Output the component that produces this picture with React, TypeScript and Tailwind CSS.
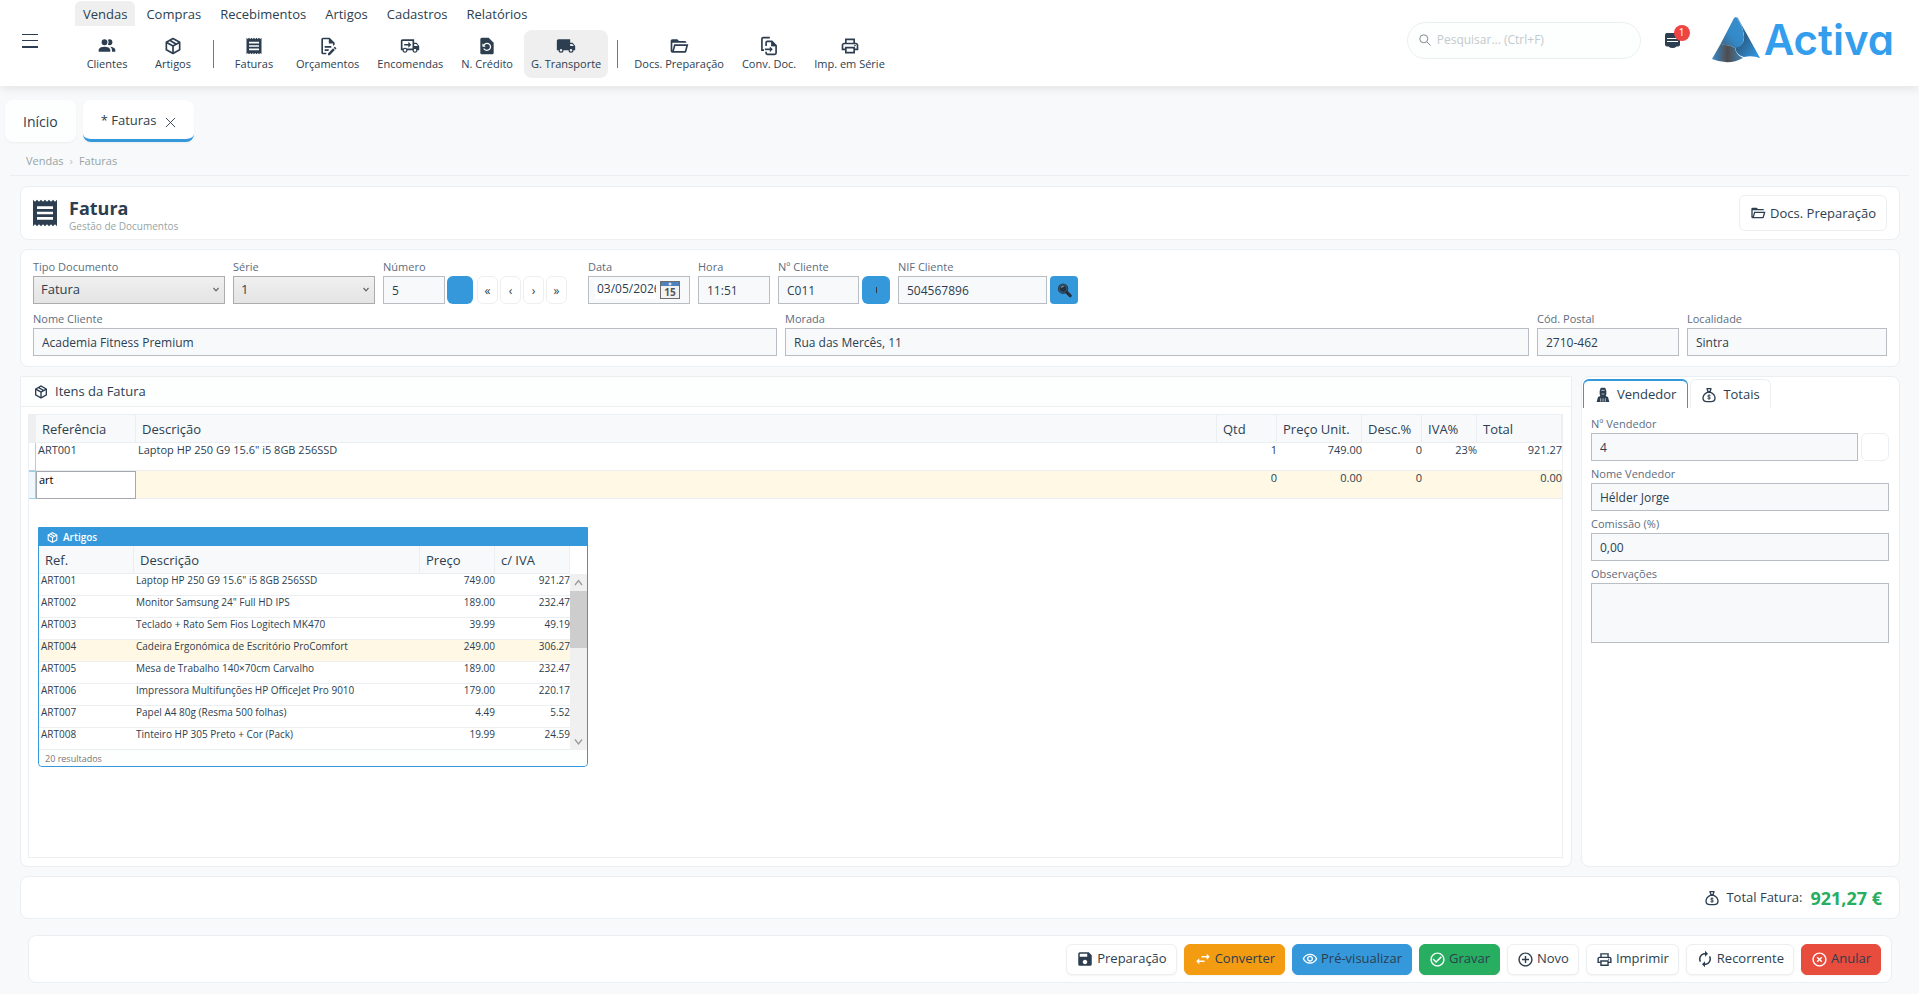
import React from 'react';
import {
  MdOutlinePrint,
  MdRestorePage,
  MdSave,
  MdSwapHoriz,
  MdOutlineVisibility,
  MdCheckCircleOutline,
  MdAddCircleOutline,
  MdAutorenew,
  MdHighlightOff,
} from 'react-icons/md';

type IconProps = { className?: string };

function Glyph({ d, className }: { d: string; className?: string }) {
  return (
    <svg viewBox="0 0 24 24" fill="currentColor" fillRule="evenodd" className={className} aria-hidden="true">
      <path d={d} />
    </svg>
  );
}

const PEOPLE =
  'M16 17V19H2V17S2 13 9 13 16 17 16 17M12.5 7.5A3.5 3.5 0 1 0 9 11A3.5 3.5 0 0 0 12.5 7.5M15.94 13A5.32 5.32 0 0 1 18 17V19H22V17S22 13.37 15.94 13M15 4A3.39 3.39 0 0 0 13.07 4.59A5 5 0 0 1 13.07 10.41A3.39 3.39 0 0 0 15 11A3.5 3.5 0 0 0 15 4Z';
const BOX =
  'M21,16.5C21,16.88 20.79,17.21 20.47,17.38L12.57,21.82C12.41,21.94 12.21,22 12,22C11.79,22 11.59,21.94 11.43,21.82L3.53,17.38C3.21,17.21 3,16.88 3,16.5V7.5C3,7.12 3.21,6.79 3.53,6.62L11.43,2.18C11.59,2.06 11.79,2 12,2C12.21,2 12.41,2.06 12.57,2.18L20.47,6.62C20.79,6.79 21,7.12 21,7.5V16.5M12,4.15L10.11,5.22L16,8.61L17.96,7.5L12,4.15M6.04,7.5L12,10.85L13.96,9.75L8.08,6.35L6.04,7.5M5,15.91L11,19.29V12.58L5,9.21V15.91M19,15.91V9.21L13,12.58V19.29L19,15.91Z';
const RECEIPT =
  'M3,22L4.5,20.5L6,22L7.5,20.5L9,22L10.5,20.5L12,22L13.5,20.5L15,22L16.5,20.5L18,22L19.5,20.5L21,22V2L19.5,3.5L18,2L16.5,3.5L15,2L13.5,3.5L12,2L10.5,3.5L9,2L7.5,3.5L6,2L4.5,3.5L3,2M18,9H6V7H18M18,13H6V11H18M18,17H6V15H18V17Z';
const DOC_EDIT =
  'M8,12H16V14H8V12M10,20H6V4H13V9H18V12.1L20,10.1V8L14,2H6A2,2 0 0,0 4,4V20A2,2 0 0,0 6,22H10V20M8,18H12.1L13,17.1V16H8V18M20.2,13C20.3,13 20.5,13.1 20.6,13.2L21.9,14.5C22.1,14.7 22.1,15.1 21.9,15.3L20.9,16.3L18.8,14.2L19.8,13.2C19.9,13.1 20,13 20.2,13M20.2,16.9L14.1,23H12V20.9L18.1,14.8L20.2,16.9Z';
const TRUCK_ARROW =
  'M18 18.5C18.83 18.5 19.5 17.83 19.5 17C19.5 16.17 18.83 15.5 18 15.5C17.17 15.5 16.5 16.17 16.5 17C16.5 17.83 17.17 18.5 18 18.5M19.5 9.5H17V12H21.46L19.5 9.5M6 18.5C6.83 18.5 7.5 17.83 7.5 17C7.5 16.17 6.83 15.5 6 15.5C5.17 15.5 4.5 16.17 4.5 17C4.5 17.83 5.17 18.5 6 18.5M20 8L23 12V17H21C21 18.66 19.66 20 18 20C16.34 20 15 18.66 15 17H9C9 18.66 7.66 20 6 20C4.34 20 3 18.66 3 17H1V6C1 4.89 1.89 4 3 4H17V8H20M3 6V15H3.76C4.31 14.39 5.11 14 6 14C6.89 14 7.69 14.39 8.24 15H15V6H3M10 7L13.5 10.5L10 14V11.5H5V9.5H10V7Z';
const TRUCK =
  'M18,18.5A1.5,1.5 0 0,1 16.5,17A1.5,1.5 0 0,1 18,15.5A1.5,1.5 0 0,1 19.5,17A1.5,1.5 0 0,1 18,18.5M19.5,9.5L21.46,12H17V9.5M6,18.5A1.5,1.5 0 0,1 4.5,17A1.5,1.5 0 0,1 6,15.5A1.5,1.5 0 0,1 7.5,17A1.5,1.5 0 0,1 6,18.5M20,8H17V4H3C1.89,4 1,4.89 1,6V17H3A3,3 0 0,0 6,20A3,3 0 0,0 9,17H15A3,3 0 0,0 18,20A3,3 0 0,0 21,17H23V12L20,8Z';
const FOLDER =
  'M6.1,10L4,18V8H21A2,2 0 0,0 19,6H12L10,4H4A2,2 0 0,0 2,6V18A2,2 0 0,0 4,20H19C19.9,20 20.7,19.4 20.9,18.5L23.2,10H6.1M19,18H6L7.6,12H20.6L19,18Z';

function DocSwap({ className }: IconProps) {
  return (
    <svg viewBox="0 0 24 24" fill="none" stroke="currentColor" strokeWidth="2" className={className} aria-hidden="true">
      <path d="M13 2H5a1.500 1.500 0 0 0-1.500 1.500V17H6" />
      <path d="M8.500 12V8a1.500 1.500 0 0 1 1.500-1.500h5.500L20.500 11.500V20.500a1.500 1.500 0 0 1-1.500 1.500H10a1.500 1.500 0 0 1-1.500-1.500V19" />
      <path d="M15 6.500V12h5.500z" fill="currentColor" strokeWidth="1" />
      <path d="M7 16h7" />
      <path d="M13 12.500L16.500 16 13 19.500z" fill="currentColor" stroke="none" />
    </svg>
  );
}

function MoneyBag({ className }: IconProps) {
  return (
    <svg viewBox="0 0 24 24" fill="none" stroke="currentColor" strokeWidth="2" className={className} aria-hidden="true">
      <path d="M9 2.500h6l-1.500 4.500h-3z" strokeLinejoin="round" />
      <path d="M9.500 8C5.500 10 3 13 3 16.500 3 20 5.500 22 9 22h6c3.500 0 6-2 6-5.500 0-3.500-2.500-6.500-6.500-8.500z" />
      <path d="M14.300 13.200c-.6-.7-1.300-.9-2.300-.9-1.300 0-2.100.6-2.100 1.400 0 2 4.300.8 4.300 2.800 0 .9-.9 1.400-2.200 1.400-1 0-1.900-.3-2.400-1M12 11.200v7.800" strokeWidth="1.300" />
    </svg>
  );
}

function Seller({ className }: IconProps) {
  return (
    <svg viewBox="0 0 24 24" className={className} aria-hidden="true">
      <path fill="currentColor" d="M8 3Q8 1 10 1h4q2 0 2 2l1 3v5l-1 2.500 3.500 1.500 2 7.500H2.500l2-7.500L8 13.500 7 11V6z" />
      <path stroke="#fff" strokeWidth="1" fill="none" d="M9.500 5h5M8.500 17v5M15.500 17v5M12 17v5M10 10.500h4" />
    </svg>
  );
}

function Calendar({ className }: IconProps) {
  return (
    <svg viewBox="0 0 20 18" className={className} aria-hidden="true">
      <rect x="0.500" y="0.500" width="19" height="17" fill="#f2f2f2" stroke="#6d6d6d" />
      <rect x="1" y="1" width="18" height="4" fill="#4f81bd" />
      <path d="M10 1.500v3M8.500 3h3" stroke="#fff" />
      <text x="10" y="15" textAnchor="middle" fontSize="10" fontWeight="700" fontFamily="Open Sans, sans-serif" fill="#555">15</text>
    </svg>
  );
}

function Logo() {
  return (
    <svg viewBox="0 0 48 46" className="h-[46px] w-12" aria-hidden="true">
      <defs>
        <linearGradient id="lg1" x1="1" y1="0" x2="0.100" y2="1">
          <stop offset="0" stopColor="#3b8fcc" />
          <stop offset="0.600" stopColor="#3389c8" />
          <stop offset="1" stopColor="#3f6483" />
        </linearGradient>
        <linearGradient id="lg2" x1="0" y1="0" x2="0.800" y2="1">
          <stop offset="0" stopColor="#3586bf" />
          <stop offset="0.500" stopColor="#2b618c" />
          <stop offset="1" stopColor="#3295dc" />
        </linearGradient>
        <linearGradient id="lg3" x1="0" y1="0" x2="1" y2="0">
          <stop offset="0" stopColor="#3a8ccb" />
          <stop offset="0.500" stopColor="#504c4e" />
          <stop offset="1" stopColor="#3a84bb" />
        </linearGradient>
      </defs>
      <path d="M24 0Q26 0 27 3L48 41Q40 38 32 40 24 38 23 30 33 29 32 18 30 6 24 0z" fill="url(#lg2)" />
      <path d="M24 0Q22 0 21 3L8 28Q16 27 23 31 32 30 32 20 31 8 24 0z" fill="url(#lg1)" />
      <path d="M8 28Q16 27 23 31 24 38 31 41 17 49 0 42z" fill="url(#lg3)" />
    </svg>
  );
}

const menus = ['Vendas', 'Compras', 'Recebimentos', 'Artigos', 'Cadastros', 'Relatórios'];

function Tool({ icon, label, active }: { icon: React.ReactNode; label: string; active?: boolean }) {
  return (
    <button
      type="button"
      className={`flex h-12 min-w-[62px] flex-col items-center rounded-lg px-[7px] pt-1.5 text-[11px] leading-4 ${active ? 'bg-[#efefef]' : ''}`}
    >
      {icon}
      <span>{label}</span>
    </button>
  );
}

function Divider() {
  return <span className="mx-[5px] h-7 w-px bg-[#777]" />;
}

function Field({ label, id, value, className }: { label: string; id: string; value: string; className?: string }) {
  return (
    <div className={`flex flex-col gap-px ${className ?? ''}`}>
      <label htmlFor={id} className="text-[11px] leading-4 text-[#5d6d7e]">{label}</label>
      <input id={id} defaultValue={value} className="h-7 w-full min-w-0 border border-[#b8bec3] bg-[#f8f9fb] px-2 text-xs" />
    </div>
  );
}

function Pick({ label, id, value, className }: { label: string; id: string; value: string; className?: string }) {
  return (
    <div className={`flex flex-col gap-px ${className ?? ''}`}>
      <label htmlFor={id} className="text-[11px] leading-4 text-[#5d6d7e]">{label}</label>
      <div className="relative">
        <select id={id} className="h-7 w-full appearance-none border border-[#acacac] bg-linear-to-b from-[#f0f0f0] to-[#e4e4e4] px-[7px] text-[13px]">
          <option>{value}</option>
        </select>
        <svg viewBox="0 0 8 6" className="pointer-events-none absolute top-[11px] right-[5px] h-1.5 w-2" fill="none" stroke="#666" strokeWidth="1.200" aria-hidden="true">
          <path d="M1.500 1L4 3.800 6.500 1" />
        </svg>
      </div>
    </div>
  );
}

function Action({ icon, label, tone }: { icon: React.ReactNode; label: string; tone?: string }) {
  return (
    <button
      type="button"
      className={`flex h-[31px] items-center gap-[3px] rounded-md border px-[9px] text-[13px] shadow-xs ${tone ?? 'border-[#eceff1] bg-white'}`}
    >
      {icon}
      <span className="text-[#2c3e50]">{label}</span>
    </button>
  );
}

const articles = [
  ['ART001', 'Laptop HP 250 G9 15.6" i5 8GB 256SSD', '749.00', '921.27'],
  ['ART002', 'Monitor Samsung 24" Full HD IPS', '189.00', '232.47'],
  ['ART003', 'Teclado + Rato Sem Fios Logitech MK470', '39.99', '49.19'],
  ['ART004', 'Cadeira Ergonómica de Escritório ProComfort', '249.00', '306.27'],
  ['ART005', 'Mesa de Trabalho 140×70cm Carvalho', '189.00', '232.47'],
  ['ART006', 'Impressora Multifunções HP OfficeJet Pro 9010', '179.00', '220.17'],
  ['ART007', 'Papel A4 80g (Resma 500 folhas)', '4.49', '5.52'],
  ['ART008', 'Tinteiro HP 305 Preto + Cor (Pack)', '19.99', '24.59'],
];

function ArticlePopup() {
  return (
    <div className="absolute top-[112px] left-[9px] w-[550px] rounded-b border border-[#3498db] bg-white">
      <div className="flex h-[18px] items-center gap-1 bg-[#3498db] px-[7px] pt-px text-[10px] font-semibold text-white">
        <Glyph d={BOX} className="size-[13px]" />
        Artigos
      </div>
      <div className="flex">
        <table className="flex-1 table-fixed border-separate border-spacing-0 text-left">
          <colgroup>
            <col className="w-[95px]" />
            <col />
            <col className="w-[75px]" />
            <col className="w-[75px]" />
          </colgroup>
          <thead>
            <tr className="h-7 bg-[#f8f9fb] text-[13px]">
              {['Ref.', 'Descrição', 'Preço', 'c/ IVA'].map((h) => (
                <th key={h} className="border-r border-b border-[#eceff1] px-1.5 pt-0.5 pb-0 font-normal">{h}</th>
              ))}
            </tr>
          </thead>
          <tbody className="text-[10px] leading-3">
            {articles.map((r) => (
              <tr key={r[0]} className={`h-[22px] align-top ${r[0] === 'ART004' ? 'bg-[#fff8e5]' : ''}`}>
                <td className="border-b border-[#eceff1] px-0.5 py-0">{r[0]}</td>
                <td className="border-b border-[#eceff1] px-0.5 py-0">{r[1]}</td>
                <td className="border-b border-[#eceff1] py-0 text-right">{r[2]}</td>
                <td className="border-b border-[#eceff1] py-0 text-right">{r[3]}</td>
              </tr>
            ))}
          </tbody>
        </table>
        <div className="mt-7 flex w-[17px] flex-col items-center bg-[#f0f0f0]">
          <svg viewBox="0 0 17 17" className="size-[17px]" fill="none" stroke="#999" strokeWidth="1.300" aria-hidden="true"><path d="M5 11L8.500 6.500 12 11" /></svg>
          <div className="h-[57px] w-full bg-[#cdcdcd]" />
          <svg viewBox="0 0 17 17" className="mt-auto size-[17px]" fill="none" stroke="#999" strokeWidth="1.300" aria-hidden="true"><path d="M5 6.500L8.500 11 12 6.500" /></svg>
        </div>
      </div>
      <div className="flex h-4 items-center rounded-b bg-[#fdfefe] px-1.5 pt-0.5 text-[9px] text-[#777]">20 resultados</div>
    </div>
  );
}

export default function App() {
  return (
    <div className="flex min-h-screen flex-col bg-[#f8f9fb] font-['Open_Sans','Noto_Sans',sans-serif] text-[13px] text-[#2c3e50]">
      <header className="flex h-[86px] items-center bg-white pr-[25px] shadow-[0_2px_10px_rgba(0,0,0,0.1)]">
        <button type="button" aria-label="Menu" className="mb-1 ml-[22px] flex w-4 flex-col gap-[5px]">
          <span className="h-px w-full bg-[#2c3e50]" />
          <span className="h-px w-full bg-[#2c3e50]" />
          <span className="h-0.5 w-full bg-[#2c3e50]" />
        </button>
        <div className="ml-[37px] flex h-full flex-col pt-px">
          <nav className="flex h-[25px] gap-[3px]">
            {menus.map((m, i) => (
              <a key={m} href="#" className={`flex items-center rounded-t-md px-2 pt-0.5 ${i === 0 ? 'bg-[#efefef]' : ''}`}>{m}</a>
            ))}
          </nav>
          <div className="mt-1 ml-px flex items-center gap-1">
            <Tool icon={<Glyph d={PEOPLE} className="size-5" />} label="Clientes" />
            <Tool icon={<Glyph d={BOX} className="size-5" />} label="Artigos" />
            <Divider />
            <Tool icon={<Glyph d={RECEIPT} className="size-5" />} label="Faturas" />
            <Tool icon={<Glyph d={DOC_EDIT} className="size-5" />} label="Orçamentos" />
            <Tool icon={<Glyph d={TRUCK_ARROW} className="size-5" />} label="Encomendas" />
            <Tool icon={<MdRestorePage className="size-5" />} label="N. Crédito" />
            <Tool icon={<Glyph d={TRUCK} className="size-5" />} label="G. Transporte" active />
            <Divider />
            <Tool icon={<Glyph d={FOLDER} className="size-5" />} label="Docs. Preparação" />
            <Tool icon={<DocSwap className="size-5" />} label="Conv. Doc." />
            <Tool icon={<MdOutlinePrint className="size-5" />} label="Imp. em Série" />
          </div>
        </div>
        <div className="mb-1.5 ml-auto flex items-center">
          <label className="flex h-[37px] w-[234px] items-center gap-1.5 rounded-full border border-[#eceff1] bg-[#fdfefe] px-[11px]">
            <svg viewBox="0 0 12 12" className="size-3" fill="none" stroke="#7f8c8d" aria-hidden="true"><circle cx="4.800" cy="4.800" r="4" /><path d="M7.800 7.800L11.500 11.500" /></svg>
            <input aria-label="Pesquisar" placeholder="Pesquisar... (Ctrl+F)" className="min-w-0 flex-1 bg-transparent text-xs outline-none placeholder:text-[#c3cacd]" />
          </label>
          <button type="button" aria-label="Notificações" className="relative ml-6 size-[15px]">
            <svg viewBox="0 0 15 15" className="size-[15px]" aria-hidden="true">
              <path fill="#2c3e50" d="M2 0h11a2 2 0 0 1 2 2v9.500a2 2 0 0 1-2 2h-1.500Q10 15 7.500 15T3.500 13.500H2a2 2 0 0 1-2-2V2a2 2 0 0 1 2-2z" />
              <path stroke="#fff" d="M2 5.500h11M2 8.500h11" />
            </svg>
            <span className="absolute -top-2 left-[9px] flex size-4 items-center justify-center rounded-full bg-[#ef4444] text-[10px] text-white">1</span>
          </button>
          <div className="ml-8 flex items-center gap-1">
            <Logo />
            <span className="font-[Inter,sans-serif] text-[42px] leading-[46px] font-semibold text-[#349eed] [font-feature-settings:'cv11']">Activa</span>
          </div>
        </div>
      </header>

      <div className="flex gap-[7px] px-[5px] pt-[14px]">
        <button type="button" className="flex h-[42px] items-center rounded-lg bg-[#fdfefe] px-[18px] pt-0.5 text-sm shadow-xs">Início</button>
        <button type="button" className="flex h-[42px] items-center gap-2 rounded-lg border-b-3 border-[#3498db] bg-white pt-0.5 pr-[18px] pl-[18px] shadow-xs">
          * Faturas
          <svg viewBox="0 0 12 12" className="mt-1 size-[11px]" fill="none" stroke="#2c3e50" aria-hidden="true"><path d="M1 1l10 10M11 1L1 11" /></svg>
        </button>
      </div>
      <div className="mx-[10px] flex h-[34px] items-center gap-1.5 border-b border-[#eceff1] px-4 pt-1.5 text-[11px] text-[#95a5a6]">
        <a href="#">Vendas</a>
        <span className="text-[#bdc3c7]">›</span>
        <a href="#">Faturas</a>
      </div>

      <main className="flex flex-1 flex-col gap-[9px] pt-[10px] pr-[19px] pb-[11px] pl-5">
        <section className="flex h-[54px] items-center rounded-lg border border-[#eceff1] bg-white px-3">
          <Glyph d={RECEIPT} className="-ml-1 size-8" />
          <div className="ml-2 flex flex-col pt-px">
            <h1 className="text-lg leading-6 font-bold">Fatura</h1>
            <span className="text-[10px] leading-3 text-[#95a5a6]">Gestão de Documentos</span>
          </div>
          <button type="button" className="ml-auto flex h-9 items-center gap-1 rounded-md border border-[#eceff1] bg-white px-[10px]">
            <Glyph d={FOLDER} className="size-4" />
            <span className="pt-px">Docs. Preparação</span>
          </button>
        </section>

        <section className="flex flex-col gap-[7px] rounded-lg border border-[#eceff1] bg-white px-3 pt-[9px] pb-[10px]">
          <div className="flex items-end gap-2">
            <Pick label="Tipo Documento" id="tipo" value="Fatura" className="w-48" />
            <Pick label="Série" id="serie" value="1" className="w-[142px]" />
            <div className="flex items-end gap-0.5">
              <Field label="Número" id="numero" value="5" className="w-[62px]" />
              <button type="button" aria-label="Procurar documento" className="mr-0.5 h-7 w-[26px] rounded-md bg-[#3498db]" />
              {['«', '‹', '›', '»'].map((s) => (
                <button key={s} type="button" className="h-7 w-[21px] rounded-md border border-[#eceff1] bg-white pt-0.5 text-xs">{s}</button>
              ))}
            </div>
            <div className="ml-[13px] flex w-[102px] flex-col gap-px">
              <label htmlFor="data" className="text-[11px] leading-4 text-[#5d6d7e]">Data</label>
              <div className="flex h-7 items-center gap-1 border border-[#b8bec3] bg-[#f8f9fb] pr-[9px] pl-1.5">
                <input id="data" defaultValue="03/05/2026" className="h-[18px] min-w-0 flex-1 bg-white pb-1 pl-0.5 text-xs" />
                <button type="button" aria-label="Calendário"><Calendar className="h-[18px] w-5" /></button>
              </div>
            </div>
            <Field label="Hora" id="hora" value="11:51" className="w-[72px]" />
            <div className="flex items-end gap-[3px]">
              <Field label="Nº Cliente" id="ncliente" value="C011" className="w-[81px]" />
              <button type="button" aria-label="Procurar cliente" className="flex h-7 w-7 items-center justify-center rounded-md bg-[#3498db]">
                <span className="h-1.5 w-px bg-[#2c3e50]" />
              </button>
            </div>
            <div className="flex items-end gap-[3px]">
              <Field label="NIF Cliente" id="nif" value="504567896" className="w-[149px]" />
              <button type="button" aria-label="Procurar NIF" className="flex h-7 w-7 items-center justify-center rounded-sm bg-[#3498db]">
                <svg viewBox="0 0 16 16" className="size-[15px]" aria-hidden="true">
                  <circle cx="6.500" cy="6" r="4.800" fill="#24313f" stroke="#2c3e50" strokeWidth="1.600" />
                  <circle cx="6.500" cy="6" r="4" fill="none" stroke="#3c7aa8" strokeWidth="0.600" />
                  <path d="M4.500 4.500L7 3.500" stroke="#9cc7e6" />
                  <path d="M10.500 10L14 13.500" stroke="#24313f" strokeWidth="3.400" strokeLinecap="round" />
                </svg>
              </button>
            </div>
          </div>
          <div className="flex gap-2">
            <Field label="Nome Cliente" id="nome" value="Academia Fitness Premium" className="flex-1" />
            <Field label="Morada" id="morada" value="Rua das Mercês, 11" className="flex-1" />
            <Field label="Cód. Postal" id="cp" value="2710-462" className="w-[142px]" />
            <Field label="Localidade" id="local" value="Sintra" className="w-[200px]" />
          </div>
        </section>

        <div className="flex flex-1 gap-[9px]">
          <section className="flex flex-1 flex-col rounded-b-lg border border-[#eceff1] bg-white">
            <h2 className="flex h-[30px] items-center gap-1.5 border-b border-[#eceff1] bg-[#fdfefe] px-3 pt-px">
              <Glyph d={BOX} className="size-4" />
              Itens da Fatura
            </h2>
            <div className="relative mr-2 mb-2 ml-[7px] mt-[7px] flex-1 border border-[#eceff1]">
              <table className="w-full table-fixed border-separate border-spacing-0 text-left">
                <colgroup>
                  <col className="w-[7px]" />
                  <col className="w-[100px]" />
                  <col />
                  <col className="w-[60px]" />
                  <col className="w-[85px]" />
                  <col className="w-[60px]" />
                  <col className="w-[55px]" />
                  <col className="w-[85px]" />
                </colgroup>
                <thead>
                  <tr className="h-7 bg-[#f8f9fb]">
                    <td className="bg-[#efefef] p-0" />
                    {['Referência', 'Descrição', 'Qtd', 'Preço Unit.', 'Desc.%', 'IVA%', 'Total'].map((h) => (
                      <th key={h} className="border-r border-b border-[#eceff1] px-1.5 pt-0.5 pb-0 font-normal whitespace-nowrap">{h}</th>
                    ))}
                  </tr>
                </thead>
                <tbody className="text-[11px] leading-[14px]">
                  <tr className="h-7 align-top">
                    <td className="border-r border-b border-[#c8c8c8] p-0" />
                    {['ART001', 'Laptop HP 250 G9 15.6" i5 8GB 256SSD', '1', '749.00', '0', '23%', '921.27'].map((v, i) => (
                      <td key={i} className={`border-b border-[#eceff1] py-0 ${i > 1 ? 'text-right' : 'px-0.5'}`}>{v}</td>
                    ))}
                  </tr>
                  <tr className="h-7 bg-[#fff8e5] align-top">
                    <td className="border-y border-r border-[#8fd3f5] bg-[#eef8fd] p-0" />
                    <td className="p-0">
                      <input aria-label="Referência" defaultValue="art" className="h-7 w-full border border-[#a5a9ad] bg-white px-0.5 pb-3 text-black" />
                    </td>
                    {['', '0', '0.00', '0', '', '0.00'].map((v, i) => (
                      <td key={i} className="border-b border-[#eceff1] py-0 text-right">{v}</td>
                    ))}
                  </tr>
                </tbody>
              </table>
              <ArticlePopup />
            </div>
          </section>

          <aside className="w-[319px] rounded-lg border border-[#eceff1] bg-white">
            <div className="flex gap-0.5 px-px pt-0.5">
              <button type="button" className="flex h-[29px] items-center gap-1.5 rounded-t-md border-x border-t-2 border-[#3498db] px-[11px]">
                <Seller className="size-4" />
                Vendedor
              </button>
              <button type="button" className="flex h-[29px] items-center gap-1.5 rounded-t-md border-x border-t border-[#eceff1] px-[10px] pt-px">
                <MoneyBag className="size-4" />
                Totais
              </button>
            </div>
            <div className="flex flex-col gap-[5px] pt-2 pr-[10px] pl-[9px]">
              <div className="flex items-end gap-[3px]">
                <Field label="Nº Vendedor" id="nvend" value="4" className="flex-1" />
                <button type="button" aria-label="Procurar vendedor" className="h-7 w-7 rounded-md border border-[#eceff1] bg-white" />
              </div>
              <Field label="Nome Vendedor" id="vend" value="Hélder Jorge" />
              <Field label="Comissão (%)" id="com" value="0,00" />
              <div className="flex flex-col gap-px">
                <label htmlFor="obs" className="text-[11px] leading-4 text-[#5d6d7e]">Observações</label>
                <textarea id="obs" className="h-[60px] resize-none border border-[#b8bec3] bg-[#f8f9fb]" />
              </div>
            </div>
          </aside>
        </div>

        <section className="flex h-[43px] items-center justify-end gap-2 rounded-lg border border-[#eceff1] bg-white px-[17px]">
          <div className="flex items-center gap-1.5">
            <MoneyBag className="size-4" />
            <span className="pt-px">Total Fatura:</span>
          </div>
          <strong className="text-lg font-bold text-[#27ae60]">921,27 €</strong>
        </section>

        <footer className="mx-2 mt-[7px] flex h-12 items-center justify-end gap-[7px] rounded-lg border border-[#eceff1] bg-white px-[10px]">
          <Action icon={<MdSave className="size-[18px]" />} label="Preparação" />
          <Action icon={<MdSwapHoriz className="size-[18px]" />} label="Converter" tone="border-[#f39c12] bg-[#f39c12] text-white" />
          <Action icon={<MdOutlineVisibility className="size-4" />} label="Pré-visualizar" tone="border-[#3498db] bg-[#3498db] text-white" />
          <Action icon={<MdCheckCircleOutline className="size-[17px]" />} label="Gravar" tone="border-[#27ae60] bg-[#27ae60] text-white" />
          <Action icon={<MdAddCircleOutline className="size-[17px]" />} label="Novo" />
          <Action icon={<MdOutlinePrint className="size-[17px]" />} label="Imprimir" />
          <Action icon={<MdAutorenew className="size-[18px]" />} label="Recorrente" />
          <Action icon={<MdHighlightOff className="size-[17px]" />} label="Anular" tone="border-[#e74c3c] bg-[#e74c3c] text-white" />
        </footer>
      </main>
    </div>
  );
}
